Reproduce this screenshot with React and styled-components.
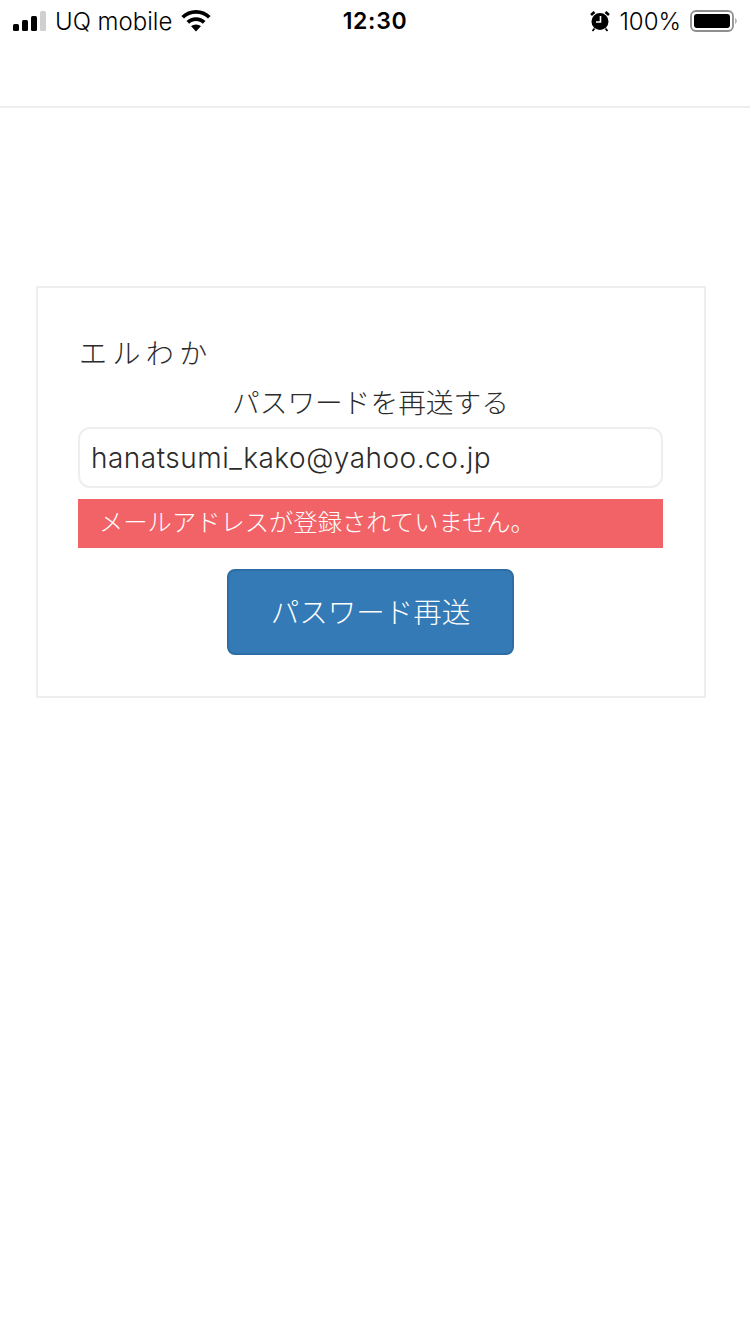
import React from "react";
import styled, { createGlobalStyle } from "styled-components";

const Global = createGlobalStyle`
  html, body { margin: 0; padding: 0; background: #fff; }
  body { font-family: "Liberation Sans", "Noto Sans CJK JP", sans-serif; color: #333; }
`;

const Page = styled.div`
  width: 750px;
  height: 1334px;
  background: #fff;
  overflow: hidden;
`;

const StatusBar = styled.div`
  box-sizing: border-box;
  height: 40px;
  padding: 2px 13px 0 13px;
  display: grid;
  grid-template-columns: 1fr auto 1fr;
  align-items: center;
  color: #000;
  font-family: Inter, "Liberation Sans", sans-serif;
  font-size: 23px;
`;

const StatusSide = styled.div`
  display: flex;
  align-items: center;
  justify-content: ${(p) => (p.$end ? "flex-end" : "flex-start")};
  gap: ${(p) => p.$gap || 8}px;
`;

const Clock = styled.div`
  font-weight: 600;
  font-size: 23px;
  letter-spacing: 0.7px;
`;

const Carrier = styled.span`
  font-size: 24px;
  font-weight: 300;
`;

const Percent = styled.span`
  font-size: 24px;
  font-weight: 300;
`;

const NavBar = styled.div`
  height: 66px;
  border-bottom: 2px solid #eeeeee;
`;

const Card = styled.div`
  box-sizing: border-box;
  margin: 178px 0 0 36px;
  width: 670px;
  height: 412px;
  border: 2px solid #eeeeee;
  padding: 45px 41px 0 40px;
  display: flex;
  flex-direction: column;
`;

const Title = styled.div`
  font-family: "Noto Sans CJK JP", sans-serif;
  font-size: 28px;
  line-height: 38px;
  letter-spacing: 5.4px;
  font-weight: 300;
  color: #2b2b2b;
  padding-left: 1px;
`;

const Subtitle = styled.div`
  font-family: "Noto Sans CJK JP", sans-serif;
  font-size: 27.7px;
  line-height: 38px;
  margin-top: 11px;
  text-align: center;
  font-weight: 300;
  color: #2b2b2b;
`;

const Field = styled.div`
  box-sizing: border-box;
  margin-top: 7px;
  height: 61px;
  border: 2px solid #eeeeee;
  border-radius: 12px;
  padding: 0 11px;
  display: flex;
  align-items: center;
  font-family: Inter, "Liberation Sans", sans-serif;
  font-size: 28px;
  font-weight: 300;
  letter-spacing: 0.5px;
  color: #2b2b2b;
`;

const ErrorBar = styled.div`
  box-sizing: border-box;
  margin-top: 11px;
  height: 49px;
  background: #f26367;
  color: #fff;
  padding: 0 0 6px 21px;
  display: flex;
  align-items: center;
  font-family: "Noto Sans CJK JP", sans-serif;
  font-size: 24.3px;
  font-weight: 300;
`;

const SubmitButton = styled.button`
  box-sizing: border-box;
  align-self: center;
  margin-top: 21px;
  width: 287px;
  height: 86px;
  background: #337ab7;
  border: 2px solid #2e6da4;
  border-radius: 8px;
  color: #fff;
  font-family: "Noto Sans CJK JP", sans-serif;
  font-size: 28.5px;
  font-weight: 300;
  padding: 0 0 4px;
`;

const SignalIcon = () => (
  <svg width="33" height="20" viewBox="0 0 33 20">
    <rect x="0" y="13" width="6" height="7" rx="1.5" fill="#000" />
    <rect x="9" y="9" width="6" height="11" rx="1.5" fill="#000" />
    <rect x="18" y="5" width="6" height="15" rx="1.5" fill="#000" />
    <rect x="27" y="0" width="6" height="20" rx="1.5" fill="#cfcfcf" />
  </svg>
);

const WifiIcon = () => (
  <svg width="30" height="22" viewBox="0 0 30 22">
    <path d="M15 0C9.3 0 4.2 2.2 0.4 5.9L3 8.6C6.1 5.6 10.3 3.8 15 3.8s8.9 1.8 12 4.8l2.6-2.7C25.8 2.2 20.7 0 15 0z" fill="#000" />
    <path d="M15 7.3c-3.7 0-7 1.4-9.5 3.8l2.7 2.7c1.8-1.7 4.2-2.7 6.8-2.7s5 1 6.8 2.7l2.7-2.7C22 8.7 18.7 7.3 15 7.3z" fill="#000" />
    <path d="M15 14.4c-1.9 0-3.6.7-4.9 1.9L15 21.5l4.9-5.2c-1.3-1.2-3-1.9-4.9-1.9z" fill="#000" />
  </svg>
);

const AlarmIcon = () => (
  <svg width="20" height="21" viewBox="0 0 20 21">
    <circle cx="10" cy="10.5" r="8.5" fill="#000" />
    <path d="M10.5 5v6H6" stroke="#fff" strokeWidth="1.6" fill="none" />
    <path d="M1 4L4.5 1M19 4L15.5 1" stroke="#000" strokeWidth="2.6" />
    <path d="M4.5 17.5l-2 2.5M15.5 17.5l2 2.5" stroke="#000" strokeWidth="1.8" />
  </svg>
);

const BatteryIcon = () => (
  <svg width="47" height="24" viewBox="0 0 47 24">
    <rect x="1" y="2" width="42" height="20" rx="5" fill="none" stroke="#8e8e8e" strokeWidth="1.8" />
    <rect x="4" y="5" width="36" height="14" rx="3" fill="#000" />
    <path d="M45 9c1.2.5 1.8 1.6 1.8 3s-.6 2.5-1.800 3z" fill="#b5b5b5" />
  </svg>
);

export default function App() {
  return (
    <Page>
      <Global />
      <StatusBar>
        <StatusSide $gap={9}>
          <SignalIcon />
          <Carrier>UQ mobile</Carrier>
          <WifiIcon />
        </StatusSide>
        <Clock>12:30</Clock>
        <StatusSide $end $gap={9}>
          <AlarmIcon />
          <Percent>100%</Percent>
          <BatteryIcon />
        </StatusSide>
      </StatusBar>
      <NavBar />
      <Card>
        <Title>エルわか</Title>
        <Subtitle>パスワードを再送する</Subtitle>
        <Field>hanatsumi_kako@yahoo.co.jp</Field>
        <ErrorBar>メールアドレスが登録されていません。</ErrorBar>
        <SubmitButton>パスワード再送</SubmitButton>
      </Card>
    </Page>
  );
}
